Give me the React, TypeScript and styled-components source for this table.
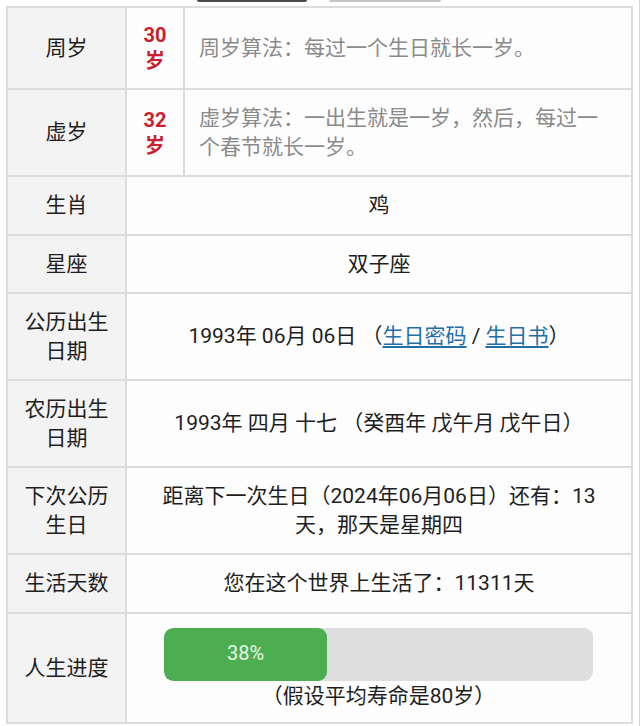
import React from "react";
import styled, { createGlobalStyle } from "styled-components";

const Global = createGlobalStyle`
  html, body { margin: 0; padding: 0; background: #ffffff; }
  body { font-family: Roboto, "Noto Sans CJK SC", sans-serif; }
`;

const Page = styled.div`
  padding: 0 7px 0 6px;
  width: 640px;
  box-sizing: border-box;
  height: 726px;
  overflow: hidden;
  border-right: 1px solid #d6d6d6;
`;

const TabStrip = styled.div`
  display: flex;
  gap: 22px;
  height: 4px;
  padding-left: 191px;
  box-sizing: border-box;
`;

const TabEdge = styled.div<{ $dark?: boolean }>`
  width: ${(p) => (p.$dark ? 110 : 112)}px;
  height: 2px;
  background: ${(p) => (p.$dark ? "#4a4a4a" : "#c4c4c4")};
  border-radius: 0 0 2px 2px;
`;

const Table = styled.table`
  margin-top: 2px;
  width: 627px;
  border-collapse: collapse;
  table-layout: fixed;
  font-size: 21px;
  line-height: 28.5px;
  color: #1e1e1e;
`;

const Label = styled.th`
  background: #f3f3f3;
  border: 2px solid #dcdcdc;
  font-weight: 400;
  text-align: center;
  padding: 14px 14px;
  color: #1e1e1e;
`;

const Age = styled.td`
  background: #fdfdfd;
  border: 2px solid #dcdcdc;
  text-align: center;
  color: #c8212d;
  font-weight: 700;
  font-size: 20px;
  line-height: 26px;
  padding: 14px 2px;
`;

const Desc = styled.td`
  background: #fdfdfd;
  border: 2px solid #dcdcdc;
  color: #8a8a8a;
  padding: 14px 24px 14px 14px;
  text-align: left;
`;

const Value = styled.td`
  background: #fdfdfd;
  border: 2px solid #dcdcdc;
  text-align: center;
  padding: 14px 26px;
`;

const Link = styled.a`
  color: #1f6fa8;
  text-decoration: underline;
  text-underline-offset: 3px;
`;

const ProgressCell = styled.td`
  background: #fdfdfd;
  border: 2px solid #dcdcdc;
  text-align: center;
  padding: 14px 38px 12px 37px;
`;

const Track = styled.div`
  height: 53px;
  background: #dedede;
  border-radius: 9px;
  overflow: hidden;
  display: flex;
`;

const Fill = styled.div`
  background: #4cae50;
  border-radius: 9px;
  color: #e8f5e8;
  display: flex;
  align-items: center;
  justify-content: center;
  padding-bottom: 2px;
  box-sizing: border-box;
  font-size: 20px;
`;

const Note = styled.div`
  margin-top: 1px;
`;

export default function App() {
  const pct = 38;
  return (
    <Page>
      <Global />
      <TabStrip>
        <TabEdge $dark />
        <TabEdge />
      </TabStrip>
      <Table>
        <colgroup>
          <col style={{ width: 119 }} />
          <col style={{ width: 58 }} />
          <col />
        </colgroup>
        <tbody>
          <tr>
            <Label>周岁</Label>
            <Age>30<br />岁</Age>
            <Desc>周岁算法：每过一个生日就长一岁。</Desc>
          </tr>
          <tr>
            <Label>虚岁</Label>
            <Age>32<br />岁</Age>
            <Desc>虚岁算法：一出生就是一岁，然后，每过一个春节就长一岁。</Desc>
          </tr>
          <tr>
            <Label>生肖</Label>
            <Value colSpan={2}>鸡</Value>
          </tr>
          <tr>
            <Label>星座</Label>
            <Value colSpan={2}>双子座</Value>
          </tr>
          <tr>
            <Label>公历出生日期</Label>
            <Value colSpan={2}>
              1993年 06月 06日 （<Link href="#">生日密码</Link> / <Link href="#">生日书</Link>）
            </Value>
          </tr>
          <tr>
            <Label>农历出生日期</Label>
            <Value colSpan={2}>1993年 四月 十七 （癸酉年 戊午月 戊午日）</Value>
          </tr>
          <tr>
            <Label>下次公历生日</Label>
            <Value colSpan={2}>距离下一次生日（2024年06月06日）还有：13天，那天是星期四</Value>
          </tr>
          <tr>
            <Label>生活天数</Label>
            <Value colSpan={2}>您在这个世界上生活了：11311天</Value>
          </tr>
          <tr>
            <Label>人生进度</Label>
            <ProgressCell colSpan={2}>
              <Track>
                <Fill style={{ width: `${pct}%` }}>{pct}%</Fill>
              </Track>
              <Note>（假设平均寿命是80岁）</Note>
            </ProgressCell>
          </tr>
        </tbody>
      </Table>
    </Page>
  );
}
